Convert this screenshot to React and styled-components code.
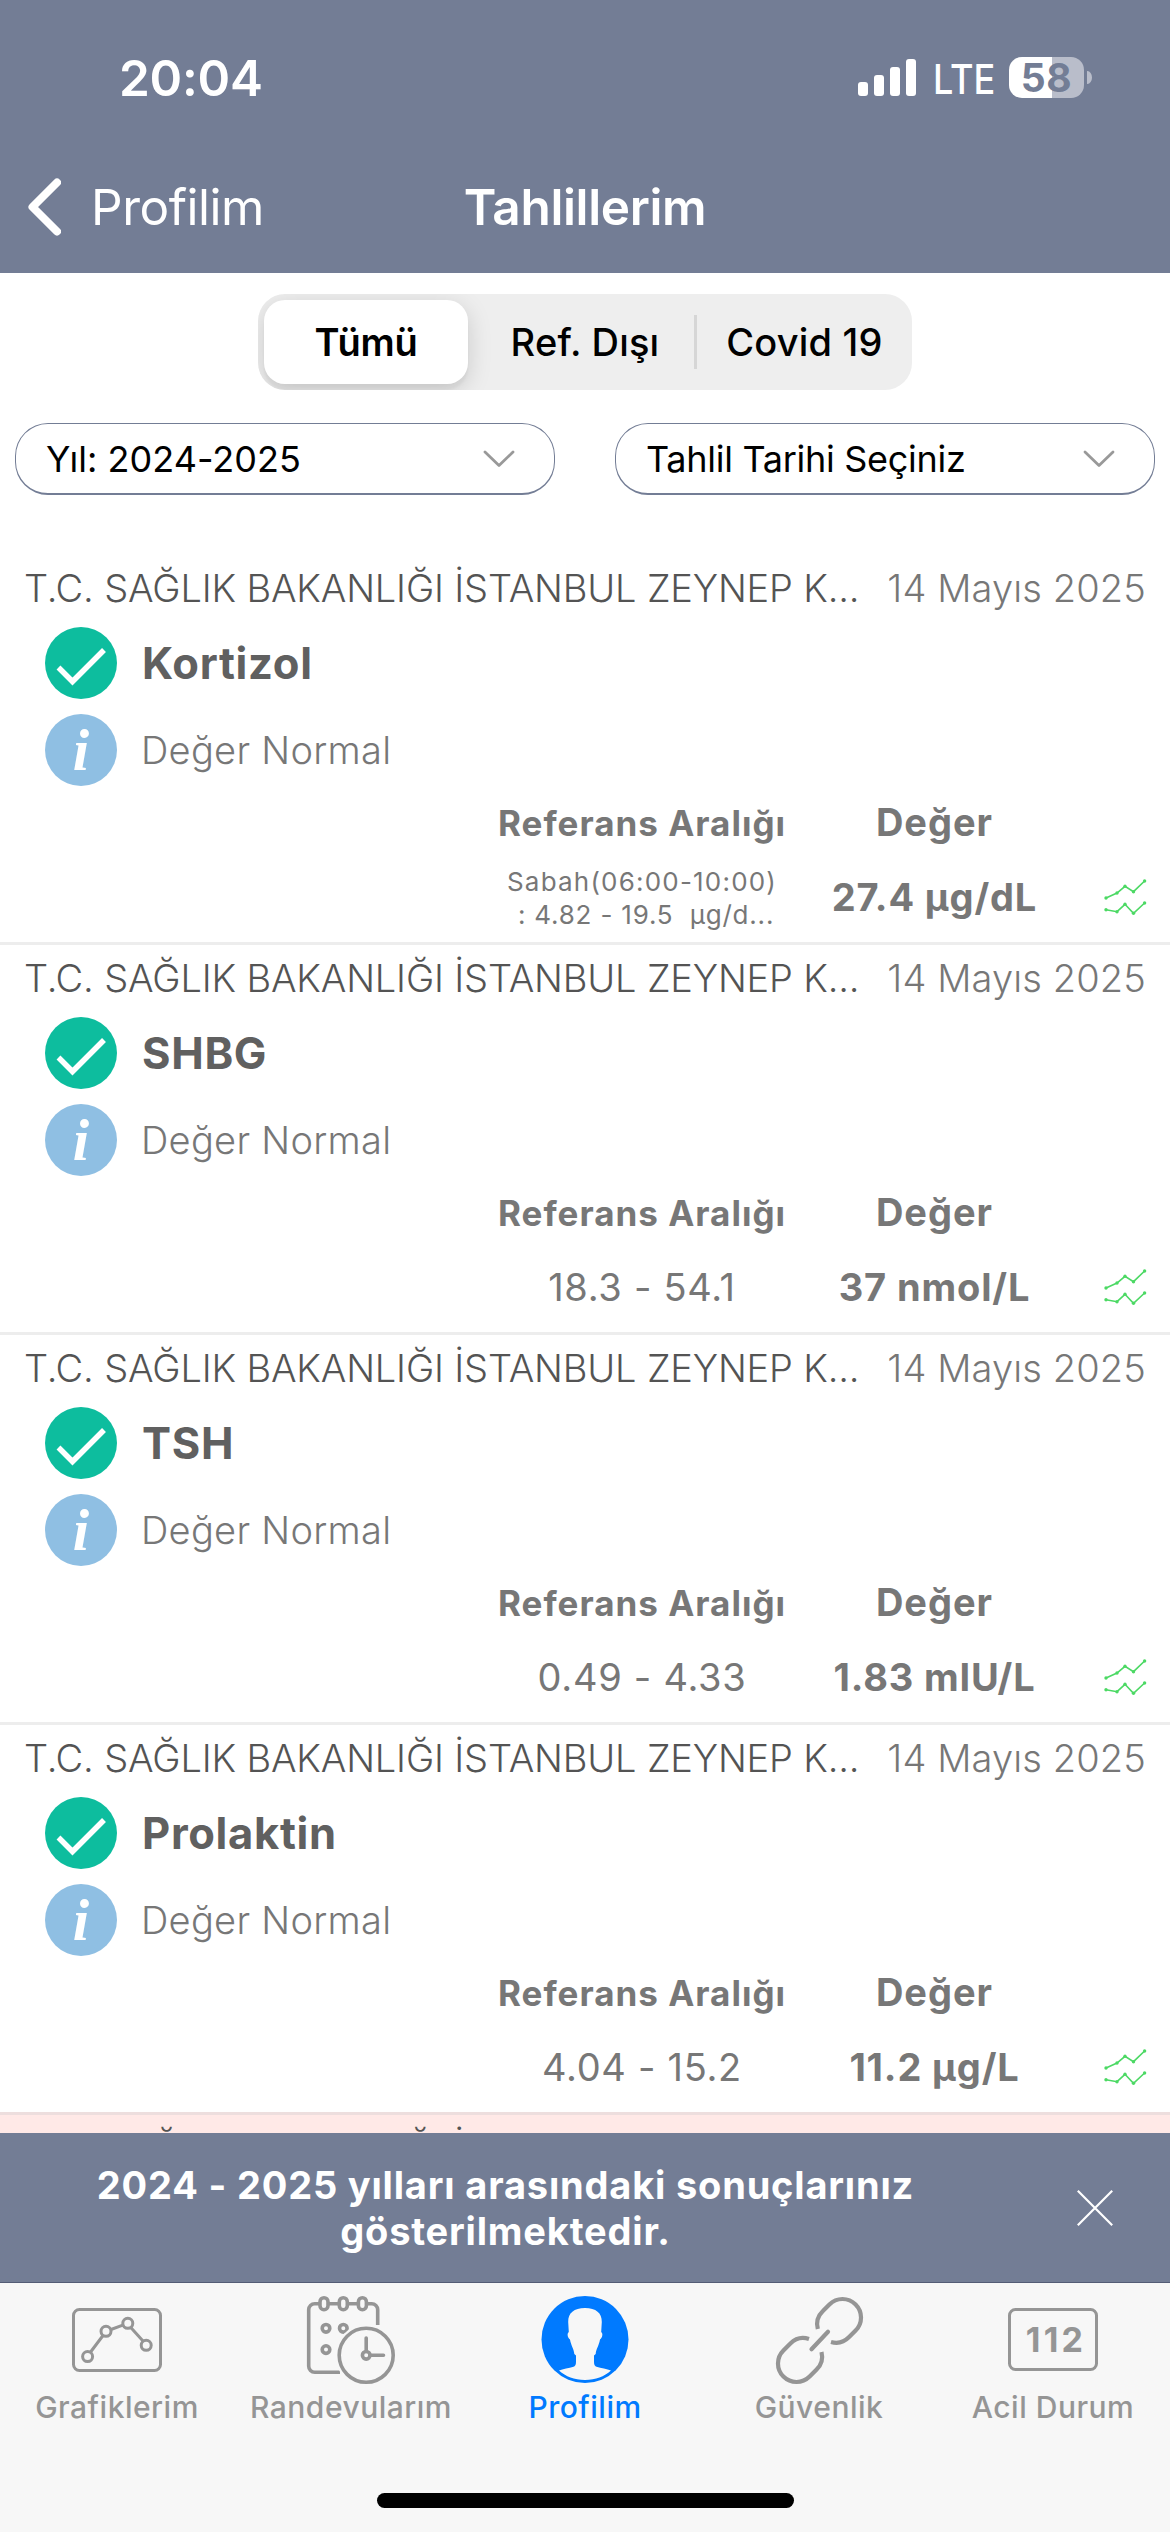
import React from 'react';
import styled, { createGlobalStyle } from 'styled-components';

const slate = '#737d95';
const tabGrey = '#959595';
const tabBlue = '#007aff';

const GlobalStyle = createGlobalStyle`
  * {
    box-sizing: border-box;
  }

  body {
    margin: 0;
    background: #fff;
    font-family: Inter, 'Liberation Sans', sans-serif;
  }

  svg {
    display: block;
  }
`;

const Screen = styled.div`
  display: flex;
  flex-direction: column;
  width: 1170px;
  height: 2532px;
  overflow: hidden;
  background: #fff;
`;

/* Header */

const Header = styled.header`
  flex: none;
  height: 273px;
  background: ${slate};
  color: #fff;
`;

const StatusBar = styled.div`
  display: flex;
  align-items: center;
  justify-content: space-between;
  height: 141px;
  padding: 14px 78px 0 119px;
`;

const Time = styled.span`
  font-size: 49.5px;
  font-weight: 600;
  letter-spacing: -0.23px;
`;

const StatusIcons = styled.div`
  display: flex;
  align-items: center;
`;

const Network = styled.span`
  width: 62px;
  margin: 2px 14px 0 16px;
  font-size: 41px;
  font-weight: 500;
  line-height: 48px;
  transform: scaleX(0.88);
  transform-origin: left;
`;

const Battery = styled.span`
  display: flex;
  align-items: center;
  justify-content: center;
  width: 75px;
  height: 41px;
  margin-right: 3px;
  border-radius: 13px;
  background: linear-gradient(90deg, #fff 57.5%, #b9bdca 57.5%);
  color: ${slate};
  font-size: 39px;
  font-weight: 700;
  line-height: 41px;
  letter-spacing: 0.5px;
`;

const BatteryTip = styled.span`
  width: 5px;
  height: 13px;
  border-radius: 0 5px 5px 0 / 0 7px 7px 0;
  background: #b9bdca;
`;

const NavBar = styled.nav`
  display: grid;
  grid-template-columns: 1fr auto 1fr;
  align-items: center;
  height: 132px;
  padding: 0 28px;
`;

const BackLink = styled.a`
  display: flex;
  align-items: center;
  gap: 30px;
  font-size: 49.5px;
  letter-spacing: -0.48px;
`;

const Title = styled.h1`
  margin: 0;
  font-size: 49.5px;
  font-weight: 600;
  letter-spacing: -0.35px;
`;

/* Filters */

const Segments = styled.div`
  display: grid;
  flex: none;
  grid-template-columns: repeat(3, 1fr);
  width: 654px;
  height: 96px;
  margin: 21px auto 0;
  border-radius: 27px;
  background: #eee;
  overflow: hidden;
`;

const Segment = styled.button`
  display: flex;
  align-items: center;
  justify-content: center;
  margin: ${(p) => (p.$active ? '6px 8px 6px 6px' : '21px 0')};
  padding: 0;
  border: none;
  border-left: ${(p) => (p.$divided ? '3px solid #d6d6d6' : 'none')};
  border-radius: ${(p) => (p.$active ? '21px' : '0')};
  background: ${(p) => (p.$active ? '#fff' : 'transparent')};
  box-shadow: ${(p) =>
    p.$active ? '0 6px 24px rgba(0, 0, 0, 0.15), 0 6px 3px rgba(0, 0, 0, 0.04)' : 'none'};
  color: #000;
  font-family: inherit;
  font-size: 38px;
  font-weight: ${(p) => (p.$active ? 600 : 500)};
  letter-spacing: ${(p) => (p.$active ? '-0.2px' : '0.2px')};
`;

const Selects = styled.div`
  display: flex;
  flex: none;
  justify-content: space-between;
  margin: 33px 15px 60px;
`;

const Select = styled.div`
  display: flex;
  align-items: center;
  justify-content: space-between;
  width: 540px;
  height: 72px;
  padding: 0 39px 0 30px;
  border: 1px solid ${slate};
  border-bottom-width: 2px;
  border-radius: 33px;
  color: #000;
  font-size: 36px;
  letter-spacing: ${(p) => p.$spacing};
`;

/* Results */

const Results = styled.main`
  flex: 1;
  min-height: 0;
  overflow: hidden;
`;

const Result = styled.article`
  height: 390px;
  border-bottom: 3px solid ${(p) => (p.$beforeAlert ? '#eddede' : '#ededed')};
  background: ${(p) => (p.$alert ? '#ffe9e7' : '#fff')};
  color: #777;
`;

const ResultHead = styled.div`
  display: flex;
  justify-content: space-between;
  padding: 0 24px;
  font-size: 38px;
  font-weight: 300;
  line-height: 67px;
  white-space: nowrap;
`;

const Hospital = styled.span`
  color: #545454;
  letter-spacing: -0.17px;
`;

const ResultDate = styled.span`
  letter-spacing: 0.13px;
`;

const Line = styled.div`
  display: flex;
  align-items: center;
  gap: 24px;
  height: 72px;
  margin-top: ${(p) => p.$top};
  padding-left: 45px;
`;

const TestName = styled.h2`
  margin: 0 0 0 1px;
  color: #606060;
  font-size: 43.5px;
  font-weight: 700;
  letter-spacing: 0.7px;
`;

const Verdict = styled.span`
  font-size: 38px;
  font-weight: 300;
  letter-spacing: 0.28px;
`;

const Values = styled.div`
  display: grid;
  grid-template-columns: 330px 255px 1fr;
  grid-template-rows: 73px 76px;
  align-items: center;
  margin-left: 477px;
  text-align: center;
`;

const ColumnTitle = styled.span`
  font-size: ${(p) => p.$size};
  font-weight: 700;
  letter-spacing: 1px;
  line-height: 73px;
  align-self: baseline;
`;

const Range = styled.span`
  font-size: 38px;
  line-height: 76px;
  letter-spacing: 0.7px;
`;

const LongRange = styled.span`
  display: flex;
  flex-direction: column;
  padding-top: 1px;
  font-size: 26px;
  line-height: 33px;
  letter-spacing: 1.2px;
  white-space: pre;
`;

const RangeLimits = styled.span`
  letter-spacing: 0.8px;
`;

const Value = styled.strong`
  font-size: 38px;
  font-weight: 700;
  letter-spacing: 0.86px;
`;

const TrendLink = styled.span`
  grid-column: 3;
  padding-left: 42px;
`;

/* Bottom */

const Banner = styled.div`
  display: flex;
  flex: none;
  align-items: center;
  height: 150px;
  border-bottom: 1px solid #535c75;
  background: ${slate};
  color: #fff;
`;

const BannerText = styled.p`
  width: 1011px;
  margin: 0 66px 0 0;
  font-size: 38px;
  font-weight: 700;
  line-height: 46px;
  letter-spacing: 0.82px;
  text-align: center;
`;

const TabBar = styled.nav`
  display: grid;
  flex: none;
  grid-template-columns: repeat(5, 1fr);
  grid-template-rows: 210px 15px;
  height: 249px;
  background: #f7f7f7;
`;

const Tab = styled.a`
  display: flex;
  flex-direction: column;
  align-items: center;
  padding-top: 11px;
  color: ${(p) => (p.$active ? tabBlue : tabGrey)};
  font-size: 30px;
  font-weight: 500;
  line-height: 42px;
  letter-spacing: 0.5px;
`;

const HomeIndicator = styled.div`
  grid-column: 1 / -1;
  justify-self: center;
  width: 417px;
  height: 15px;
  border-radius: 8px;
  background: #000;
`;

const SignalIcon = () => (
  <svg width="59" height="37" fill="#fff">
    <rect x="0" y="23" width="10" height="14" rx="3" />
    <rect x="16" y="16" width="10" height="21" rx="3" />
    <rect x="32" y="8" width="10" height="29" rx="3" />
    <rect x="48" y="0" width="10" height="37" rx="3" />
  </svg>
);

const BackIcon = () => (
  <svg width="33" height="58" fill="none" stroke="#fff" strokeWidth="8" strokeLinecap="round" strokeLinejoin="round">
    <path d="M29 4.5L4.5 29L29 53.5" />
  </svg>
);

const ChevronDown = () => (
  <svg width="32" height="18" fill="none" stroke="#999" strokeWidth="2.8" strokeLinecap="round" strokeLinejoin="round">
    <path d="M2 2L16 15.5L30 2" />
  </svg>
);

const CheckIcon = () => (
  <svg width="72" height="72">
    <circle cx="36" cy="36" r="36" fill="#0dbd9e" />
    <path d="M13.5 40.5L27.5 54.5L59 23" fill="none" stroke="#fff" strokeWidth="5.5" />
  </svg>
);

const InfoIcon = () => (
  <svg width="72" height="72">
    <circle cx="36" cy="36" r="36" fill="#8fbfe3" />
    <text
      x="36"
      y="55.5"
      fill="#fff"
      textAnchor="middle"
      fontFamily="'Liberation Serif', serif"
      fontSize="59"
      fontStyle="italic"
      fontWeight="700"
    >
      i
    </text>
  </svg>
);

const upper = [[2, 19], [13, 14], [21, 7.3], [29.5, 12.7], [40.6, 2]];
const lower = [[2, 30.7], [13, 32.7], [21, 25.3], [29.5, 34.3], [40.6, 24]];

const TrendIcon = () => (
  <svg width="43" height="37" stroke="#4cd964" fill="none" strokeWidth="1.6">
    {[upper, lower].map((line, i) => (
      <g key={i}>
        <polyline points={line.join(' ')} />
        {line.map(([x, y]) => (
          <circle key={x} cx={x} cy={y} r="1.7" fill="#4cd964" stroke="none" />
        ))}
      </g>
    ))}
  </svg>
);

const CloseIcon = () => (
  <svg width="36" height="36" stroke="#fff" strokeWidth="2.2">
    <path d="M.8.8L35.2 35.2M35.2.8L.8 35.2" />
  </svg>
);

const TabIcon = ({ children }) => (
  <svg width="90" height="92" fill="none" stroke="currentColor" strokeWidth="3">
    {children}
  </svg>
);

const ChartIcon = () => (
  <TabIcon>
    <rect x="1.5" y="15.5" width="87" height="61" rx="6" />
    <path d="M18.6 58L31 41.5M39 35.5L50.8 31.2M58.8 33.5L71.2 47.2" />
    <circle cx="15.6" cy="62.6" r="5" />
    <circle cx="34" cy="37.3" r="5" />
    <circle cx="55.8" cy="29.3" r="5" />
    <circle cx="74.2" cy="51.3" r="5" />
  </TabIcon>
);

const CalendarIcon = () => (
  <TabIcon>
    <g strokeWidth="3.6">
      <path d="M34 78.3H8.7a6 6 0 0 1-6-6V15.7a6 6 0 0 1 6-6H14M22 9.7H33.3M41.3 9.7H52.4M60.4 9.7H65.7a6 6 0 0 1 6 6V31" />
      <rect x="14" y="3.7" width="8" height="12" rx="4" />
      <rect x="33.3" y="3.7" width="8" height="12" rx="4" />
      <rect x="52.4" y="3.7" width="8" height="12" rx="4" />
      <circle cx="20" cy="34.3" r="3.8" />
      <circle cx="37.3" cy="34.3" r="3.8" />
      <circle cx="20" cy="55.6" r="3.8" />
      <circle cx="60.2" cy="61.3" r="31" fill="#f7f7f7" stroke="none" />
      <circle cx="60.2" cy="61.3" r="27" />
      <circle cx="60.2" cy="61.3" r="3.8" />
      <path d="M60.2 57.5V44M64 61.3H77.5" strokeLinecap="round" />
    </g>
  </TabIcon>
);

const ProfileIcon = () => (
  <TabIcon>
    <circle cx="45" cy="45.5" r="43.5" fill="currentColor" stroke="none" />
    <path
      d="M45 14C34 14 28 19 28.2 28L28.8 38C26.8 39.5 27.5 43.5 30 45.5C31 51.5 34 55 34.3 60L36 61.5V68C36 71 35 72.3 33.5 72.8C29 74.2 23 75 19 76.5C26 82.5 34 86 45 86C56 86 64 82.5 71 76.5C67 75 61 74.2 56.5 72.8C55 72.3 54 71 54 68V61.5L55.7 60C56 55 59 51.5 60 45.5C62.5 43.5 63.2 39.5 61.2 38L61.8 28C62 19 56 14 45 14Z"
      fill="#f7f7f7"
      stroke="none"
    />
  </TabIcon>
);

const LinkIcon = () => (
  <TabIcon>
    <g strokeWidth="4.2">
      <path d="M43.8 35A18.5 18.5 0 0 1 48.9 16.9L55.4 10.4A18.5 18.5 0 0 1 81.6 36.6L75.1 43.1A18.5 18.5 0 0 1 57 48" />
      <path d="M35 45A18.5 18.5 0 0 0 16.4 49.4L9.4 56.4A18.5 18.5 0 0 0 35.6 82.6L42.6 75.6A18.5 18.5 0 0 0 47.5 58" />
      <path d="M37.5 55.3L54 37.8" strokeLinecap="round" />
    </g>
  </TabIcon>
);

const EmergencyIcon = () => (
  <TabIcon>
    <rect x="1.5" y="15.5" width="87" height="60" rx="6" />
    <text
      x="48"
      y="58"
      fill="currentColor"
      stroke="none"
      textAnchor="middle"
      fontFamily="Inter, sans-serif"
      fontSize="34"
      fontWeight="700"
      letterSpacing="3.2"
    >
      112
    </text>
  </TabIcon>
);

const hospital = 'T.C. SAĞLIK BAKANLIĞI İSTANBUL ZEYNEP K...';
const date = '14 Mayıs 2025';

const results = [
  { name: 'Kortizol', period: 'Sabah(06:00-10:00)', range: ' : 4.82 - 19.5  µg/d...', value: '27.4 µg/dL' },
  { name: 'SHBG', range: '18.3 - 54.1', value: '37 nmol/L' },
  { name: 'TSH', range: '0.49 - 4.33', value: '1.83 mIU/L' },
  { name: 'Prolaktin', range: '4.04 - 15.2', value: '11.2 µg/L', beforeAlert: true },
];

const tabs = [
  { label: 'Grafiklerim', Icon: ChartIcon },
  { label: 'Randevularım', Icon: CalendarIcon },
  { label: 'Profilim', Icon: ProfileIcon, active: true },
  { label: 'Güvenlik', Icon: LinkIcon },
  { label: 'Acil Durum', Icon: EmergencyIcon },
];

const ResultHeader = () => (
  <ResultHead>
    <Hospital>{hospital}</Hospital>
    <ResultDate>{date}</ResultDate>
  </ResultHead>
);

const App = () => {
  return (
    <Screen>
      <GlobalStyle />
      <Header>
        <StatusBar>
          <Time>20:04</Time>
          <StatusIcons>
            <SignalIcon />
            <Network>LTE</Network>
            <Battery>58</Battery>
            <BatteryTip />
          </StatusIcons>
        </StatusBar>
        <NavBar>
          <BackLink>
            <BackIcon />
            Profilim
          </BackLink>
          <Title>Tahlillerim</Title>
        </NavBar>
      </Header>

      <Segments>
        <Segment $active>Tümü</Segment>
        <Segment>Ref. Dışı</Segment>
        <Segment $divided>Covid 19</Segment>
      </Segments>

      <Selects>
        <Select $spacing="0.03px">
          Yıl: 2024-2025
          <ChevronDown />
        </Select>
        <Select $spacing="-0.28px">
          Tahlil Tarihi Seçiniz
          <ChevronDown />
        </Select>
      </Selects>

      <Results>
        {results.map((r) => (
          <Result key={r.name} $beforeAlert={r.beforeAlert}>
            <ResultHeader />
            <Line $top="5px">
              <CheckIcon />
              <TestName>{r.name}</TestName>
            </Line>
            <Line $top="15px">
              <InfoIcon />
              <Verdict>Değer Normal</Verdict>
            </Line>
            <Values>
              <ColumnTitle $size="35px">Referans Aralığı</ColumnTitle>
              <ColumnTitle $size="38px">Değer</ColumnTitle>
              <span />
              {r.period ? (
                <LongRange>
                  <span>{r.period}</span>
                  <RangeLimits>{r.range}</RangeLimits>
                </LongRange>
              ) : (
                <Range>{r.range}</Range>
              )}
              <Value>{r.value}</Value>
              <TrendLink>
                <TrendIcon />
              </TrendLink>
            </Values>
          </Result>
        ))}
        <Result $alert>
          <ResultHeader />
        </Result>
      </Results>

      <Banner>
        <BannerText>
          2024 - 2025 yılları arasındaki sonuçlarınız
          <br />
          gösterilmektedir.
        </BannerText>
        <CloseIcon />
      </Banner>

      <TabBar>
        {tabs.map(({ label, Icon, active }) => (
          <Tab key={label} $active={active}>
            <Icon />
            {label}
          </Tab>
        ))}
        <HomeIndicator />
      </TabBar>
    </Screen>
  );
};

export default App;
